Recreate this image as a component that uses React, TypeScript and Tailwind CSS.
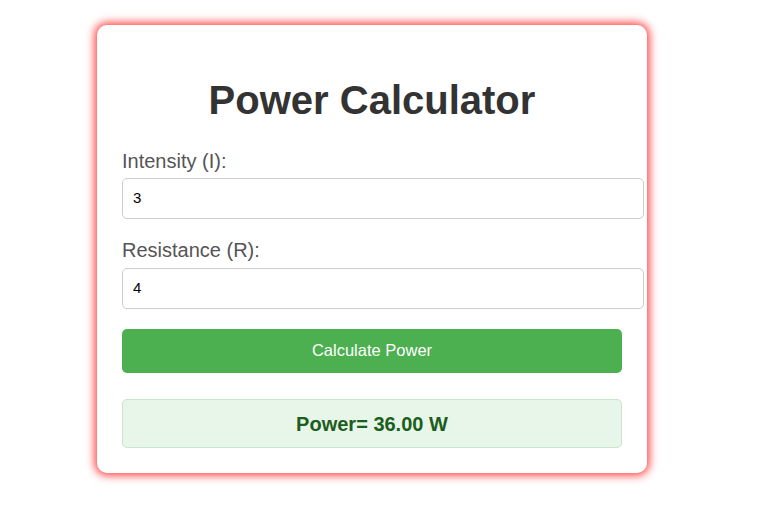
import { useState } from 'react'

export default function App() {
  const [intensity, setIntensity] = useState('3')
  const [resistance, setResistance] = useState('4')
  const [power, setPower] = useState<number | null>(36)

  const calculate = () => {
    const i = parseFloat(intensity)
    const r = parseFloat(resistance)
    if (isNaN(i) || isNaN(r)) return
    setPower(i * i * r)
  }

  return (
    <div className="min-h-screen bg-white font-['Liberation_Sans',Arial,sans-serif]">
      <div className="w-[744px] pt-[25px] pb-[33px]">
        {/* Card */}
        <div className="mx-auto w-[550px] rounded-[10px] bg-white px-[25px] pt-[52px] pb-[25px] shadow-[0_0_10px_2px_rgba(255,0,0,0.8)]">
          <h1 className="text-center text-[40px] leading-[46px] font-bold text-[#333]">
            Power Calculator
          </h1>

          <label className="mt-[27px] block text-[20px] leading-[23px] text-[#555]">
            Intensity (I):
          </label>
          <input
            type="number"
            value={intensity}
            onChange={(e) => setIntensity(e.target.value)}
            className="mt-[5px] box-content block h-[19px] w-full rounded-[5px] border border-[#ccc] p-[10px] text-[15px] text-black outline-none"
          />

          <label className="mt-[20px] block text-[20px] leading-[23px] text-[#555]">
            Resistance (R):
          </label>
          <input
            type="number"
            value={resistance}
            onChange={(e) => setResistance(e.target.value)}
            className="mt-[6px] box-content block h-[19px] w-full rounded-[5px] border border-[#ccc] p-[10px] text-[15px] text-black outline-none"
          />

          <button
            onClick={calculate}
            className="mt-[20px] block h-[44px] w-full rounded-[5px] bg-[#4caf50] pb-[2px] text-[16.5px] text-white"
          >
            Calculate Power
          </button>

          {power !== null && (
            <div className="mt-[26px] flex h-[49px] items-center justify-center rounded-[5px] border border-[#c8e6c9] bg-[#e8f5e9] text-[20px] font-bold text-[#1b5e20]">
              Power= {power.toFixed(2)} W
            </div>
          )}
        </div>
      </div>
    </div>
  )
}
